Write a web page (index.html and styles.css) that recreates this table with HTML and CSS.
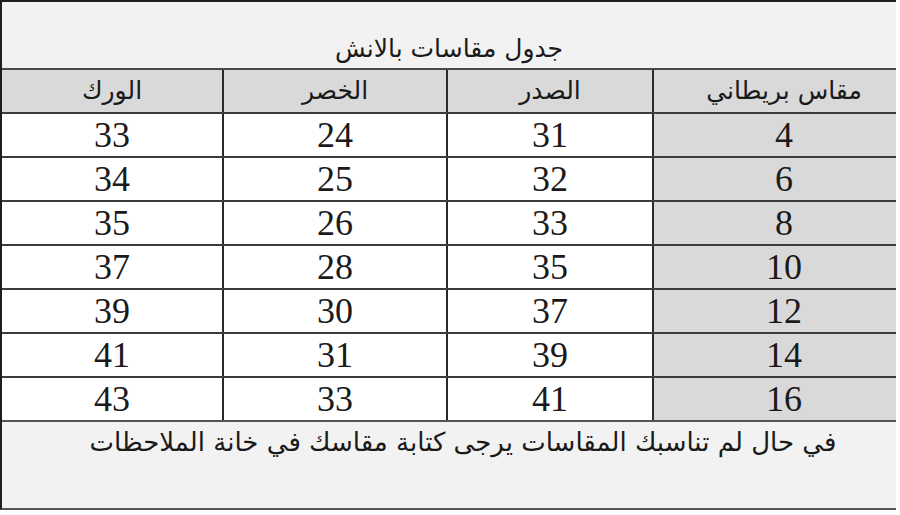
FILE: index.html
```html
<!DOCTYPE html>
<html lang="ar">
<head>
<meta charset="utf-8">
<link rel="stylesheet" href="styles.css">
</head>
<body>
<div class="sheet" dir="rtl">
  <div class="title">جدول مقاسات بالانش</div>
  <table class="grid">
    <colgroup>
      <col class="c1"><col class="c2"><col class="c3"><col class="c4">
    </colgroup>
    <thead>
      <tr><th class="size">مقاس بريطاني</th><th>الصدر</th><th>الخصر</th><th>الورك</th></tr>
    </thead>
    <tbody>
      <tr><td class="size">4</td><td>31</td><td>24</td><td>33</td></tr>
      <tr><td class="size">6</td><td>32</td><td>25</td><td>34</td></tr>
      <tr><td class="size">8</td><td>33</td><td>26</td><td>35</td></tr>
      <tr><td class="size">10</td><td>35</td><td>28</td><td>37</td></tr>
      <tr><td class="size">12</td><td>37</td><td>30</td><td>39</td></tr>
      <tr><td class="size">14</td><td>39</td><td>31</td><td>41</td></tr>
      <tr><td class="size">16</td><td>41</td><td>33</td><td>43</td></tr>
    </tbody>
  </table>
  <div class="note">في حال لم تناسبك المقاسات يرجى كتابة مقاسك في خانة الملاحظات</div>
</div>
</body>
</html>
```

FILE: styles.css
```css
html, body {
  margin: 0;
  padding: 0;
  background: #ffffff;
}

.sheet {
  width: 894px;
  height: 506px;
  border-top: 2px solid #1e1e1e;
  border-left: 2px solid #1e1e1e;
  border-bottom: 2px solid #555555;
  display: flex;
  flex-direction: column;
  font-family: "Liberation Serif", "DejaVu Sans", serif;
  color: #1a1a1a;
}

.title {
  height: 68px;
  flex: none;
  background: #f2f2f2;
  border-bottom: 2px solid #4a4a4a;
  display: flex;
  align-items: flex-end;
  justify-content: center;
  font-family: "DejaVu Sans", sans-serif;
  font-size: 25px;
  line-height: 30px;
  padding-bottom: 4px;
  box-sizing: border-box;
}

.grid {
  border-collapse: collapse;
  width: 894px;
  table-layout: fixed;
}

.c1 { width: 243px; }
.c2 { width: 206px; }
.c3 { width: 224px; }
.c4 { width: 221px; }

.grid th,
.grid td {
  height: 42px;
  padding: 0;
  text-align: center;
  border-bottom: 2px solid #3c3c3c;
  border-left: 2px solid #2a2a2a;
}

.grid th:last-child,
.grid td:last-child {
  border-left: none;
}

.grid th {
  background: #d9d9d9;
  font-family: "DejaVu Sans", sans-serif;
  font-weight: normal;
  font-size: 25px;
  line-height: 30px;
}

.grid td {
  background: #ffffff;
  font-size: 36px;
  line-height: 40px;
}

.grid .size {
  background: #d9d9d9;
  padding-left: 18px;
}

.grid tbody tr:last-child td {
  border-bottom: 2px solid #555555;
}

.note {
  flex: 1;
  background: #f2f2f2;
  text-align: center;
  font-family: "DejaVu Sans", sans-serif;
  font-size: 26px;
  line-height: 36px;
  padding-top: 2px;
  padding-left: 28px;
}
```
